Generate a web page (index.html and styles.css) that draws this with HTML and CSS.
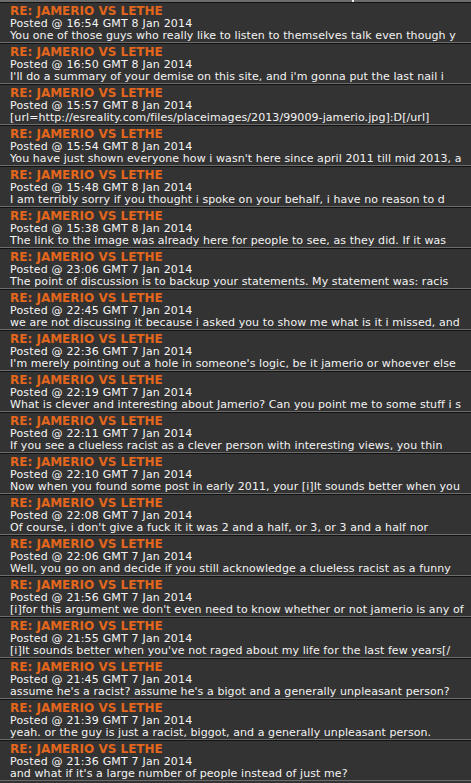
FILE: index.html
```html
<!DOCTYPE html>
<html lang="en">
<head>
  <meta charset="UTF-8" />
  <meta name="viewport" content="width=device-width, initial-scale=1.0" />
  <title>RE: JAMERIO VS LETHE</title>
  <link rel="stylesheet" href="styles.css">
</head>
<body>
  <div class="top-strip"><span class="tick"></span></div>
  <div id="list" class="post-list"></div>

<script>
  const list=document.getElementById('list');
  const posts=[
    ["16:54 GMT 8 Jan 2014","You one of those guys who really like to listen to themselves talk even though y"],
    ["16:50 GMT 8 Jan 2014","I'll do a summary of your demise on this site, and i'm gonna put the last nail i"],
    ["15:57 GMT 8 Jan 2014","[url=http://esreality.com/files/placeimages/2013/99009-jamerio.jpg]:D[/url]"],
    ["15:54 GMT 8 Jan 2014","You have just shown everyone how i wasn't here since april 2011 till mid 2013, a"],
    ["15:48 GMT 8 Jan 2014","I am terribly sorry if you thought i spoke on your behalf, i have no reason to d"],
    ["15:38 GMT 8 Jan 2014","The link to the image was already here for people to see, as they did. If it was"],
    ["23:06 GMT 7 Jan 2014","The point of discussion is to backup your statements. My statement was: racis"],
    ["22:45 GMT 7 Jan 2014","we are not discussing it because i asked you to show me what is it i missed, and"],
    ["22:36 GMT 7 Jan 2014","I'm merely pointing out a hole in someone's logic, be it jamerio or whoever else"],
    ["22:19 GMT 7 Jan 2014","What is clever and interesting about Jamerio? Can you point me to some stuff i s"],
    ["22:11 GMT 7 Jan 2014","If you see a clueless racist as a clever person with interesting views, you thin"],
    ["22:10 GMT 7 Jan 2014","Now when you found some post in early 2011, your [i]It sounds better when you"],
    ["22:08 GMT 7 Jan 2014","Of course, i don't give a fuck it it was 2 and a half, or 3, or 3 and a half nor"],
    ["22:06 GMT 7 Jan 2014","Well, you go on and decide if you still acknowledge a clueless racist as a funny"],
    ["21:56 GMT 7 Jan 2014","[i]for this argument we don't even need to know whether or not jamerio is any of"],
    ["21:55 GMT 7 Jan 2014","[i]It sounds better when you've not raged about my life for the last few years[/"],
    ["21:45 GMT 7 Jan 2014","assume he's a racist? assume he's a bigot and a generally unpleasant person?"],
    ["21:39 GMT 7 Jan 2014","yeah. or the guy is just a racist, biggot, and a generally unpleasant person."],
    ["21:36 GMT 7 Jan 2014","and what if it's a large number of people instead of just me?"]
  ];

  function post(p){
    const div=document.createElement('div');
    div.className='post';
    div.innerHTML=`
      <div class="post-title">RE: JAMERIO VS LETHE</div>
      <div class="post-date">Posted @ ${p[0]}</div>
      <div class="post-text"></div>`;
    div.querySelector('.post-text').textContent=p[1];
    return div;
  }

  posts.forEach(p=>list.appendChild(post(p)));
</script>
</body>
</html>
```

FILE: styles.css
```css
:root {
  --bg:#333333;
  --orange:#e2661c;
  --text:#f4f4f4;
  --line-dark:#121212;
  --line-light:#6c6c6c;
}
*{box-sizing:border-box;margin:0;padding:0}
body{font-family:'DejaVu Sans',Verdana,sans-serif;background:var(--bg);color:var(--text);overflow:hidden}

.top-strip{height:2px;background:var(--line-light);position:relative}
.tick{position:absolute;left:352px;top:0;width:2px;height:2px;background:#f0f0f0}

.post-list{display:flex;flex-direction:column}
.post{height:41px;border-top:1px solid var(--line-dark);border-bottom:1px solid var(--line-light);padding:2px 0 0 10px;white-space:nowrap;overflow:hidden}
.post-title{font-size:12px;line-height:13px;font-weight:bold;color:var(--orange)}
.post-date{font-size:11px;line-height:12px;letter-spacing:.18px}
.post-text{font-size:11px;line-height:12px;letter-spacing:.08px}
```
